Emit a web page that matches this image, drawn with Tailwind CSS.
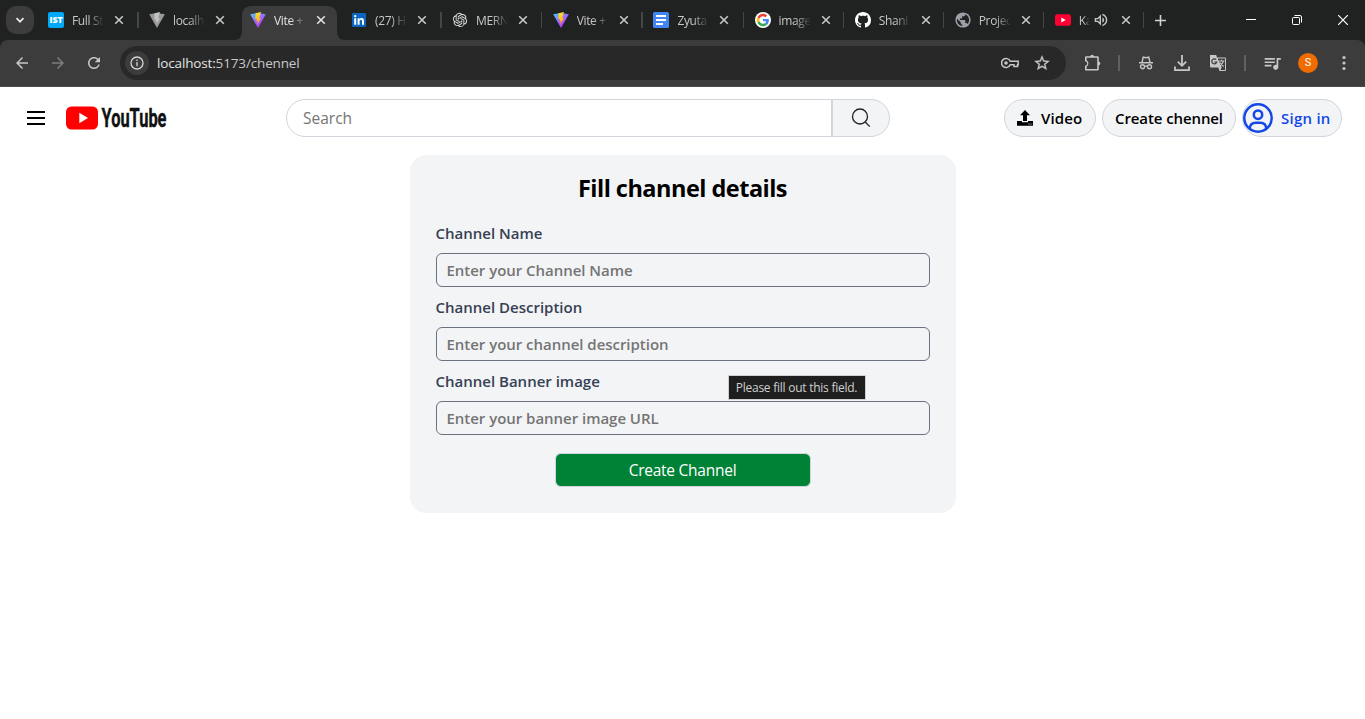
<!DOCTYPE html>
<html lang="en">
<head>
<meta charset="utf-8">
<title>Vite + React</title>
<script src="https://cdn.jsdelivr.net/npm/@tailwindcss/browser@4"></script>
</head>
<body class="h-[719px] w-[1365px] overflow-hidden bg-white font-['Open_Sans','Noto_Sans',sans-serif] text-black">
<svg class="hidden">
  <symbol id="x" viewBox="0 0 10 10"><path d="M1.2 1.2l7.6 7.6M8.8 1.2L1.2 8.8" stroke="currentColor" stroke-width="1.6"/></symbol>
  <symbol id="vite" viewBox="0 0 16 16">
    <path d="M.2 2.3L8 .9l7.8 1.4L8 16z" fill="url(#va)"/>
    <path d="M11 .1L5.6 1.2l-.4 6 1.8-.3-.5 2.500 1.400-.4-.8 3.700L11 6l-1.900.3L11 .1z" fill="url(#vb)"/>
  </symbol>
  <symbol id="vitegray" viewBox="0 0 16 16">
    <path d="M.2 2.3L8 .9l7.8 1.4L8 16z" fill="#989898"/>
    <path d="M11 .1L5.6 1.2l-.4 6 1.8-.3-.5 2.500 1.400-.4-.8 3.700L11 6l-1.900.3L11 .1z" fill="#c4c4c4"/>
  </symbol>
</svg>
<svg width="0" height="0" class="absolute">
  <defs>
    <linearGradient id="va" x1="0" y1="0" x2=".7" y2="1"><stop offset="0" stop-color="#41d1ff"/><stop offset=".6" stop-color="#a65cff"/><stop offset="1" stop-color="#bd34fe"/></linearGradient>
    <linearGradient id="vb" x1="0" y1="0" x2="0" y2="1"><stop offset="0" stop-color="#ffdd35"/><stop offset="1" stop-color="#ffa800"/></linearGradient>
  </defs>
</svg>

<header class="bg-[#202221] text-[#c7c7c7]">
  <div class="flex h-10">
    <div class="flex w-[38px] shrink-0 items-center pl-1.5">
      <div class="flex h-7 w-7 items-center justify-center rounded-[10px] bg-[#3c3c3c]"><svg class="h-2.5 w-2.5" viewBox="0 0 10 10"><path d="M1.5 3.2L5 6.7l3.5-3.5" fill="none" stroke="#e8e8e8" stroke-width="1.7"/></svg></div>
    </div>
    <nav class="flex text-[12px] tracking-[-0.35px]">
      <div class="flex w-[101px] items-center pl-2.5">
        <span class="flex h-4 w-4 items-center justify-center rounded-xs bg-[#03a9f4] text-[9px] font-extrabold tracking-[-0.2px] text-white">IST</span>
        <span class="ml-2 w-8 overflow-hidden whitespace-nowrap pt-px mask-r-from-50%">Full Stack</span>
        <svg class="ml-2.5 h-2.5 w-2.5"><use href="#x"/></svg>
        <i class="ml-auto mr-[.5px] h-4 w-[1.5px] bg-[#454545]"></i>
      </div>
      <div class="flex w-[101px] items-center pl-2.5">
        <svg class="h-4 w-4"><use href="#vitegray"/></svg>
        <span class="ml-2 w-8 overflow-hidden whitespace-nowrap pt-px mask-r-from-50%">localhost</span>
        <svg class="ml-2.5 h-2.5 w-2.5"><use href="#x"/></svg>
      </div>
      <div class="relative flex w-[101px] items-center pl-2.5 text-[#e3e3e3]">
        <svg class="absolute -left-[6px] top-1.5 h-[34px] w-[111px]" viewBox="0 0 111 34"><path d="M0 34Q8 34 8 25V10Q8 0 18 0H93Q103 0 103 10V25Q103 34 111 34z" fill="#3c3c3c"/></svg>
        <svg class="relative h-4 w-4"><use href="#vite"/></svg>
        <span class="relative ml-2 w-8 overflow-hidden whitespace-nowrap pt-px mask-r-from-50%">Vite + React</span>
        <svg class="relative ml-2.5 h-2.5 w-2.5"><use href="#x"/></svg>
      </div>
      <div class="flex w-[101px] items-center pl-2.5">
        <svg class="h-4 w-4" viewBox="0 0 16 16"><rect x="1" y="1" width="14" height="14" rx="1.3" fill="#0a66c2"/><path d="M3.2 6.3h2v6.500h-2zM6.6 6.300h1.900v.9c.4-.7 1.100-1.100 2-1.100 1.900 0 2.500 1.200 2.500 3.100v3.600h-2V9.500c0-.9-.1-1.700-1.100-1.700-1.100 0-1.300.8-1.300 1.700v3.300h-2z" fill="#fff"/><circle cx="4.2" cy="4.2" r="1.15" fill="#fff"/></svg>
        <span class="ml-2 w-8 overflow-hidden whitespace-nowrap pt-px mask-r-from-50%">(27) Home</span>
        <svg class="ml-2.5 h-2.5 w-2.5"><use href="#x"/></svg>
        <i class="ml-auto mr-[.5px] h-4 w-[1.5px] bg-[#454545]"></i>
      </div>
      <div class="flex w-[100.7px] items-center pl-2.5">
        <svg class="h-4 w-4" viewBox="-1.5 -1.5 27 27" fill="#e0e0e0"><path d="M22.2819 9.8211a5.9847 5.9847 0 0 0-.5157-4.9108 6.0462 6.0462 0 0 0-6.5098-2.9A6.0651 6.0651 0 0 0 4.9807 4.1818a5.9847 5.9847 0 0 0-3.9977 2.9 6.0462 6.0462 0 0 0 .7427 7.0966 5.98 5.98 0 0 0 .511 4.9107 6.051 6.051 0 0 0 6.5146 2.9001A5.9847 5.9847 0 0 0 13.2599 24a6.0557 6.0557 0 0 0 5.7718-4.2058 5.9894 5.9894 0 0 0 3.9977-2.9001 6.0557 6.0557 0 0 0-.7475-7.0729zm-9.022 12.6081a4.4755 4.4755 0 0 1-2.8764-1.0408l.1419-.0804 4.7783-2.7582a.7948.7948 0 0 0 .3927-.6813v-6.7369l2.02 1.1686a.071.071 0 0 1 .038.052v5.5826a4.504 4.504 0 0 1-4.4945 4.4944zm-9.6607-4.1254a4.4708 4.4708 0 0 1-.5346-3.0137l.142.0852 4.783 2.7582a.7712.7712 0 0 0 .7806 0l5.8428-3.3685v2.3324a.0804.0804 0 0 1-.0332.0615L9.74 19.9502a4.4992 4.4992 0 0 1-6.1408-1.6464zM2.3408 7.8956a4.485 4.485 0 0 1 2.3655-1.9728V11.6a.7664.7664 0 0 0 .3879.6765l5.8144 3.3543-2.0201 1.1685a.0757.0757 0 0 1-.071 0l-4.8303-2.7865A4.504 4.504 0 0 1 2.3408 7.872zm16.5963 3.8558L13.1038 8.364 15.1192 7.2a.0757.0757 0 0 1 .071 0l4.8303 2.7913a4.4944 4.4944 0 0 1-.6765 8.1042v-5.6772a.79.79 0 0 0-.407-.667zm2.0107-3.0231l-.142-.0852-4.7735-2.7818a.7759.7759 0 0 0-.7854 0L9.409 9.2297V6.8974a.0662.0662 0 0 1 .0284-.0615l4.8303-2.7866a4.4992 4.4992 0 0 1 6.6802 4.66zM8.3065 12.863l-2.02-1.1638a.0804.0804 0 0 1-.038-.0567V6.0742a4.4992 4.4992 0 0 1 7.3757-3.4537l-.142.0805L8.704 5.459a.7948.7948 0 0 0-.3927.6813zm1.0976-2.3654l2.602-1.4998 2.6069 1.4998v2.9994l-2.5974 1.4997-2.6067-1.4997Z"/></svg>
        <span class="ml-2 w-8 overflow-hidden whitespace-nowrap pt-px mask-r-from-50%">MERN Stack</span>
        <svg class="ml-2.5 h-2.5 w-2.5"><use href="#x"/></svg>
        <i class="ml-auto mr-[.5px] h-4 w-[1.5px] bg-[#454545]"></i>
      </div>
      <div class="flex w-[100.7px] items-center pl-2.5">
        <svg class="h-4 w-4"><use href="#vite"/></svg>
        <span class="ml-2 w-8 overflow-hidden whitespace-nowrap pt-px mask-r-from-50%">Vite + React</span>
        <svg class="ml-2.5 h-2.5 w-2.5"><use href="#x"/></svg>
        <i class="ml-auto mr-[.5px] h-4 w-[1.5px] bg-[#454545]"></i>
      </div>
      <div class="flex w-[100.7px] items-center pl-2.5">
        <svg class="h-4 w-4" viewBox="0 0 16 16"><rect width="16" height="16" rx="1.5" fill="#4285f4"/><path d="M3 3h10v2H3zM3 7h10v2H3zM3 11h7v2H3z" fill="#fff"/></svg>
        <span class="ml-2 w-8 overflow-hidden whitespace-nowrap pt-px mask-r-from-50%">Zyuta</span>
        <svg class="ml-2.5 h-2.5 w-2.5"><use href="#x"/></svg>
        <i class="ml-auto h-4 w-[1.5px] bg-[#454545]"></i>
      </div>
      <div class="flex w-[100.2px] items-center pl-[10.5px]">
        <svg class="h-4 w-4" viewBox="0 0 48 48"><circle cx="24" cy="24" r="24" fill="#fff"/><g transform="translate(5.5 5.5) scale(.77)"><path fill="#EA4335" d="M24 9.5c3.54 0 6.71 1.22 9.21 3.6l6.85-6.85C35.9 2.38 30.47 0 24 0 14.62 0 6.51 5.38 2.56 13.22l7.98 6.19C12.43 13.72 17.74 9.5 24 9.5z"/><path fill="#4285F4" d="M46.98 24.55c0-1.57-.15-3.09-.38-4.55H24v9.02h12.94c-.58 2.96-2.26 5.48-4.78 7.18l7.73 6c4.51-4.18 7.09-10.36 7.09-17.65z"/><path fill="#FBBC05" d="M10.53 28.59c-.48-1.45-.76-2.99-.76-4.59s.27-3.14.76-4.59l-7.98-6.19C.92 16.46 0 20.12 0 24c0 3.88.92 7.54 2.56 10.78l7.97-6.19z"/><path fill="#34A853" d="M24 48c6.48 0 11.93-2.13 15.89-5.81l-7.73-6c-2.15 1.45-4.92 2.3-8.16 2.3-6.26 0-11.57-4.22-13.47-9.91l-7.98 6.19C6.51 42.62 14.62 48 24 48z"/></g></svg>
        <span class="ml-2 w-8 overflow-hidden whitespace-nowrap pt-px mask-r-from-50%">image</span>
        <svg class="ml-2.5 h-2.5 w-2.5"><use href="#x"/></svg>
        <i class="ml-auto h-4 w-[1.5px] bg-[#454545]"></i>
      </div>
      <div class="flex w-[100px] items-center pl-[10.5px]">
        <svg class="h-4 w-4" viewBox="0 0 16 16"><path fill="#fff" d="M8 0C3.58 0 0 3.58 0 8c0 3.54 2.29 6.53 5.47 7.59.4.07.55-.17.55-.38 0-.19-.01-.82-.01-1.49-2.01.37-2.53-.49-2.69-.94-.09-.23-.48-.94-.82-1.13-.28-.15-.68-.52-.01-.53.63-.01 1.08.58 1.23.82.72 1.21 1.87.87 2.33.66.07-.52.28-.87.51-1.07-1.78-.2-3.64-.89-3.64-3.95 0-.87.31-1.59.82-2.15-.08-.2-.36-1.02.08-2.12 0 0 .67-.21 2.2.82.64-.18 1.32-.27 2-.27s1.36.09 2 .27c1.53-1.04 2.2-.82 2.2-.82.44 1.1.16 1.92.08 2.12.51.56.82 1.27.82 2.15 0 3.07-1.87 3.75-3.65 3.95.29.25.54.73.54 1.48 0 1.07-.01 1.93-.01 2.2 0 .21.15.46.55.38A8.01 8.01 0 0 0 16 8c0-4.42-3.58-8-8-8z"/></svg>
        <span class="ml-2 w-8 overflow-hidden whitespace-nowrap pt-px mask-r-from-50%">Shani</span>
        <svg class="ml-2.5 h-2.5 w-2.5"><use href="#x"/></svg>
        <i class="ml-auto h-4 w-[1.5px] bg-[#454545]"></i>
      </div>
      <div class="flex w-[100px] items-center pl-[10.5px]">
        <svg class="h-4 w-4" viewBox="1.5 1.5 21 21" fill="#9aa0a6"><circle cx="12" cy="12" r="10"/><path d="M4.100 10.500L9 15v1c0 1.100.9 2 2 2v1.800C7 19.300 4 16 4 12zM17.900 17.400c-.3-.8-1-1.400-1.900-1.400h-1v-3c0-.6-.5-1-1-1H8v-2h2c.6 0 1-.4 1-1V7h2c1.100 0 2-.9 2-2v-.4c2.900 1.200 5 4.100 5 7.400 0 2.100-.8 4-2.100 5.400z" fill="#202221"/></svg>
        <span class="ml-2 w-8 overflow-hidden whitespace-nowrap pt-px mask-r-from-50%">Projec</span>
        <svg class="ml-2.5 h-2.5 w-2.5"><use href="#x"/></svg>
        <i class="ml-auto h-4 w-[1.5px] bg-[#454545]"></i>
      </div>
      <div class="flex w-[100px] items-center pl-[10.5px]">
        <svg class="h-4 w-4" viewBox="0 0 16 16"><rect y="2.3" width="16" height="11.4" rx="2.5" fill="#ff0033"/><path d="M6.3 5.500L10.700 8l-4.400 2.500z" fill="#fff"/></svg>
        <span class="ml-2 w-[11px] overflow-hidden whitespace-nowrap pt-px mask-r-from-40%">Ka</span>
        <svg class="ml-1 h-3.5 w-3.5" viewBox="2 2 20 20" fill="currentColor"><path d="M3 9v6h4l5 5V4L7 9H3zm7-.17v6.340L7.830 13H5v-2h2.830L10 8.830zM16.500 12c0-1.770-1.020-3.290-2.500-4.030v8.050c1.480-.730 2.500-2.250 2.500-4.020zM14 3.230v2.060c2.890.860 5 3.540 5 6.710s-2.110 5.850-5 6.710v2.060c4.010-.910 7-4.490 7-8.770s-2.990-7.860-7-8.770z"/></svg>
        <svg class="ml-[13px] h-2.5 w-2.5"><use href="#x"/></svg>
        <i class="ml-auto h-4 w-[1.5px] bg-[#454545]"></i>
      </div>
    </nav>
    <div class="flex flex-1 items-center pl-[11px]"><svg class="h-[11px] w-[11px]" viewBox="0 0 11 11"><path d="M5.500 0v11M0 5.500h11" stroke="#d0d0d0" stroke-width="1.6"/></svg></div>
    <div class="-mr-px flex text-white">
      <div class="flex w-[46px] items-center justify-center"><svg class="h-2.5 w-2.5" viewBox="0 0 10 10"><path d="M0 4.500h10" stroke="currentColor"/></svg></div>
      <div class="flex w-[46px] items-center justify-center"><svg class="h-2.5 w-2.5" viewBox="0 0 10 10" fill="none" stroke="currentColor"><rect x=".5" y="2.5" width="7" height="7" rx="1"/><path d="M2.500.5H8A1.500 1.500 0 0 1 9.500 2v5.500"/></svg></div>
      <div class="flex w-[46px] items-center justify-center"><svg class="h-2.5 w-2.5" viewBox="0 0 10 10"><path d="M0 0l10 10M10 0L0 10" stroke="currentColor" stroke-width="1.2"/></svg></div>
    </div>
  </div>

  <div class="flex h-[47px] items-center rounded-t-lg border-b border-[#494949] bg-[#3c3c3c] pl-1">
    <div class="flex w-9 justify-center"><svg class="h-[18px] w-[18px]" viewBox="0 0 24 24" fill="currentColor"><path d="M20 11H7.830l5.590-5.590L12 4l-8 8 8 8 1.410-1.410L7.830 13H20v-2z"/></svg></div>
    <div class="flex w-9 justify-center text-[#7d7d7d]"><svg class="h-[18px] w-[18px] -scale-x-100" viewBox="0 0 24 24" fill="currentColor"><path d="M20 11H7.830l5.590-5.590L12 4l-8 8 8 8 1.410-1.410L7.830 13H20v-2z"/></svg></div>
    <div class="flex w-9 justify-center"><svg class="h-[18px] w-[18px]" viewBox="0 0 24 24" fill="currentColor"><path d="M17.650 6.350C16.200 4.900 14.210 4 12 4c-4.420 0-7.990 3.580-7.990 8s3.570 8 7.990 8c3.730 0 6.840-2.550 7.730-6h-2.080c-.820 2.330-3.040 4-5.650 4-3.310 0-6-2.690-6-6s2.690-6 6-6c1.660 0 3.140.690 4.220 1.780L13 11h7V4l-2.350 2.350z"/></svg></div>
    <div class="ml-2 flex h-[34px] w-[946px] items-center rounded-full bg-[#282828] pl-[5px] pr-2">
      <div class="flex h-6 w-6 items-center justify-center rounded-full bg-[#3c3c3c]"><svg class="h-3.5 w-3.5" viewBox="0 0 14 14" fill="none" stroke="#d5d5d5" stroke-width="1.3"><circle cx="7" cy="7" r="6"/><path d="M7 6v4.300M7 3.500v1.400"/></svg></div>
      <span class="ml-2 flex-1 text-[13.5px] tracking-[-0.15px]"><span class="text-[#e3e3e3]">localhost:</span>5173/chennel</span>
      <div class="flex w-8 justify-center"><svg class="h-3 w-[18px]" viewBox="0 0 18 12" fill="none" stroke="currentColor" stroke-width="1.5"><path d="M9.200 4.200A4.500 4.500 0 1 0 9.200 7.800H13v1.800h3.500V7.800h.7V4.200z"/><circle cx="5" cy="6" r="1.8" fill="currentColor" stroke="none"/></svg></div>
      <div class="flex w-8 justify-center"><svg class="h-[18px] w-[18px]" viewBox="0 0 24 24" fill="currentColor" stroke="currentColor" stroke-width=".4"><path d="M22 9.240l-7.190-.620L12 2 9.190 8.630 2 9.240l5.460 4.730L5.820 21 12 17.270 18.180 21l-1.630-7.030L22 9.240zM12 15.400l-3.760 2.270 1-4.280-3.320-2.880 4.380-.380L12 6.100l1.710 4.040 4.380.380-3.320 2.880 1 4.280L12 15.400z"/></svg></div>
    </div>
    <div class="ml-[9px] flex w-9 justify-center"><svg class="h-[18px] w-[18px]" viewBox="0 0 18 18" fill="currentColor"><path d="M2.200 2.200H6a2.200 2.200 0 0 1 4.200 0h3.300a1.300 1.300 0 0 1 1.300 1.300v3.900a2.200 2.200 0 0 1 0 4.200v3.700a1.300 1.300 0 0 1-1.300 1.300H2.200A1.200 1.200 0 0 1 1 15.400v-3.700a2.200 2.200 0 0 0 0-4.400V3.400a1.200 1.200 0 0 1 1.200-1.200zM2.600 3.800v2.500a3.700 3.700 0 0 1 0 6.400V15h10.600V3.800z" fill-rule="evenodd"/></svg></div>
    <div class="flex w-[16px] justify-center"><i class="h-4 w-[1.5px] bg-[#606060]"></i></div>
    <div class="ml-px flex w-9 justify-center"><svg class="h-3.5 w-3.5" viewBox="0 0 14 14" fill="none" stroke="currentColor" stroke-width="1.4"><path d="M0 6.700h14M3 6.500L4.200 1.200 7 1.800l2.800-.6L11 6.500M5.600 10.300q1.400-.8 2.800 0"/><circle cx="3.5" cy="10.7" r="2"/><circle cx="10.5" cy="10.7" r="2"/></svg></div>
    <div class="flex w-9 justify-center"><svg class="h-4 w-4" viewBox="0 0 16 16" fill="none" stroke="currentColor" stroke-width="1.8"><path d="M8 0v10.500M3.800 6.600L8 10.800l4.200-4.200M1 11.500v3.600h14v-3.600"/></svg></div>
    <div class="flex w-9 justify-center"><svg class="h-[18px] w-[18px]" viewBox="0 0 18 18"><path d="M1 1h6.200l.8 2.500h8a1 1 0 0 1 1 1V16a1 1 0 0 1-1 1h-5.500l-1.200-3.500H2a1 1 0 0 1-1-1z" fill="#c7c7c7"/><path d="M8.700 4.500h7.300V16h-4.500l1.200-2.500z" fill="#3c3c3c"/><path d="M9.500 7h6M12.500 5.700V7M14.500 7q-1 3.500-4 5M11 8.500q1.500 2.500 3.700 4" fill="none" stroke="#c7c7c7" stroke-width="1.1"/><path d="M7.200 5.700A2.500 2.500 0 1 0 7.700 8H5.500" fill="none" stroke="#3c3c3c" stroke-width="1.2"/></svg></div>
    <div class="flex w-[18px] justify-center"><i class="h-4 w-[1.5px] bg-[#606060]"></i></div>
    <div class="flex w-9 justify-center"><svg class="h-[17px] w-[17px]" viewBox="2.2 2.5 20 20" fill="currentColor"><path d="M15 6H3v2h12V6zm0 4H3v2h12v-2zM3 16h8v-2H3v2zM17 6v8.180c-.310-.110-.650-.180-1-.180-1.660 0-3 1.340-3 3s1.340 3 3 3 3-1.340 3-3V8h3V6h-5z"/></svg></div>
    <div class="flex w-9 justify-center"><span class="flex h-5 w-5 items-center justify-center rounded-full bg-[#ef6c00] font-['Roboto'] text-[11px] text-white">S</span></div>
    <div class="flex w-9 justify-center"><svg class="h-4 w-4" viewBox="0 0 16 16" fill="currentColor"><circle cx="8" cy="2.5" r="1.6"/><circle cx="8" cy="8" r="1.6"/><circle cx="8" cy="13.5" r="1.6"/></svg></div>
  </div>
</header>

<div class="flex h-[62px] items-center pl-[27px] pr-[23px] font-semibold">
  <svg class="h-4 w-[18px]" viewBox="0 0 18 16"><path d="M0 2h18M0 8h18M0 14h18" stroke="#000" stroke-width="2"/></svg>
  <svg class="ml-[21px] h-6 w-[102px]" viewBox="0 0 102 24">
    <rect y=".5" width="32" height="23" rx="5.5" fill="#f00"/><path d="M13.300 6.800L22 12l-8.700 5.200z" fill="#fff"/>
    <text x="35.5" y="20.7" font-family="Roboto, sans-serif" font-weight="700" font-size="25" textLength="65" lengthAdjust="spacingAndGlyphs" fill="#111" stroke="#111" stroke-width=".4">YouTube</text>
  </svg>
  <div class="ml-[118px] flex h-[38px] w-[604px]">
    <div class="flex w-[546px] items-center rounded-l-full border border-gray-300 pl-4 pt-px text-[15.5px] font-normal text-[#757575]">Search</div>
    <div class="flex flex-1 items-center justify-center rounded-r-full border border-l border-gray-300 bg-gray-100"><svg class="h-5 w-5" viewBox="0 0 20 20" fill="none" stroke="#222" stroke-width="1.3"><circle cx="9" cy="8.5" r="7.5"/><path d="M14.200 14l4.600 4.600"/></svg></div>
  </div>
  <div class="ml-auto flex gap-1.5 text-[15px] tracking-[-0.1px]">
    <div class="flex h-[38px] w-[92px] items-center rounded-full border border-gray-300 bg-gray-100 pl-3"><svg class="h-4 w-4" viewBox="0 0 16 16"><path d="M8 0l5 5.200h-3V11H6V5.200H3zM0 11h5v1.200h6V11h5v4.800H0z"/><path d="M11.500 14h1M13.500 14h1" stroke="#fff" stroke-width=".9"/></svg><span class="ml-2 tracking-[0.1px]">Video</span></div>
    <div class="flex h-[38px] w-[134px] items-center justify-center whitespace-nowrap rounded-full border border-gray-300 bg-gray-100">Create chennel</div>
    <div class="flex h-[38px] w-[100px] items-center rounded-full border border-gray-300 bg-gray-100 text-[#1447e6]"><svg class="h-[30px] w-[30px] shrink-0" viewBox="0 0 30 30" fill="none" stroke="currentColor" stroke-width="2.5"><circle cx="15" cy="15" r="13.7"/><circle cx="15" cy="11.7" r="4.2"/><path d="M6.700 25.500c.3-4 3-5.800 6-5.800h4.600c3 0 5.700 1.800 6 5.800"/></svg><span class="ml-2 whitespace-nowrap tracking-[0.25px]">Sign in</span></div>
  </div>
</div>

<main class="mx-auto mt-1.5 h-[358px] w-[546px] rounded-2xl bg-gray-100 px-[26px] pt-[15px] text-[15px] font-semibold">
  <h1 class="text-center text-[23.5px]/9 font-bold tracking-[-0.52px]">Fill channel details</h1>
  <form class="mt-[15px] flex flex-col">
    <label class="leading-6 text-[#364153]">Channel Name</label>
    <div class="mt-2 flex h-[34px] items-center rounded-md border border-gray-500 px-2.5 pt-px tracking-[-0.03px] text-[#757575]">Enter your Channel Name</div>
    <label class="mt-2 leading-6 text-[#364153]">Channel Description</label>
    <div class="mt-2 flex h-[34px] items-center rounded-md border border-gray-500 px-2.5 pt-px tracking-[-0.03px] text-[#757575]">Enter your channel description</div>
    <label class="mt-2 leading-6 text-[#364153]">Channel Banner image</label>
    <div class="relative mt-2 flex h-[34px] items-center rounded-md border border-gray-500 px-2.5 pt-px tracking-[-0.03px] text-[#757575]">Enter your banner image URL
      <div class="absolute -top-[27px] left-[291px] flex h-[25px] w-[138px] items-center justify-center whitespace-nowrap border border-[#cfcfcf] bg-[#1f1f1f] text-[12px] font-normal tracking-[-0.25px] text-[#d0d0d0]">Please fill out this field.</div>
    </div>
    <div class="mx-auto mt-[18px] flex h-[34px] w-64 items-center justify-center rounded-md border border-gray-300 bg-[#008236] pt-px text-[15.5px] font-normal tracking-[-0.25px] text-white">Create Channel</div>
  </form>
</main>
</body>
</html>
